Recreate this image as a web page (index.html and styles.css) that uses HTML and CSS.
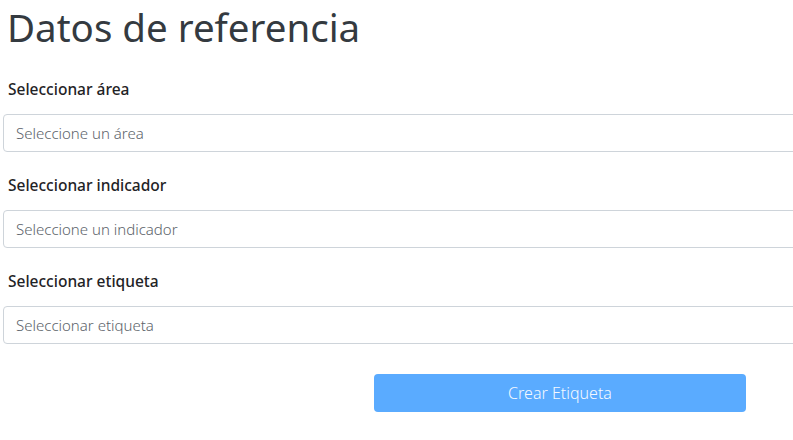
FILE: index.html
```html
<!DOCTYPE html>
<html lang="es">
<head>
<meta charset="utf-8">
<link rel="stylesheet" href="styles.css">
</head>
<body>
<div class="page">
  <h1 class="title">Datos de referencia</h1>
  <div class="field">
    <label class="label">Seleccionar área</label>
    <div class="input">Seleccione un área</div>
  </div>
  <div class="field">
    <label class="label">Seleccionar indicador</label>
    <div class="input">Seleccione un indicador</div>
  </div>
  <div class="field">
    <label class="label">Seleccionar etiqueta</label>
    <div class="input">Seleccionar etiqueta</div>
  </div>
  <div class="actions">
    <button class="btn">Crear Etiqueta</button>
  </div>
</div>
</body>
</html>
```
FILE: styles.css
```css
html, body {
  margin: 0;
  padding: 0;
  background: #fff;
  overflow: hidden;
}
body {
  font-family: "Noto Sans", "Lato", sans-serif;
  color: #212529;
  width: 793px;
  height: 440px;
}
.page {
  padding: 0 0 0 3px;
}
.title {
  margin: 0;
  padding: 3px 0 0 4px;
  font-size: 38.5px;
  font-weight: 400;
  line-height: 48px;
  color: #343a40;
  height: 70px;
  box-sizing: border-box;
}
.field {
  display: flex;
  flex-direction: column;
  margin-bottom: 14px;
}
.label {
  padding-left: 5px;
  font-size: 15.5px;
  font-weight: 500;
  line-height: 38px;
  height: 44px;
  color: #1f2326;
}
.input {
  width: 820px;
  height: 38px;
  box-sizing: border-box;
  border: 1px solid #ced4da;
  border-radius: 4px;
  padding: 0 12px;
  font-size: 15px;
  font-weight: 300;
  line-height: 36px;
  color: #5c636a;
}
.actions {
  display: flex;
  padding-left: 371px;
  padding-top: 16px;
}
.btn {
  width: 372px;
  height: 38px;
  border: none;
  border-radius: 4px;
  background: #5aabff;
  color: #f4f9ff;
  font-family: inherit;
  font-size: 16px;
  font-weight: 300;
}
```
